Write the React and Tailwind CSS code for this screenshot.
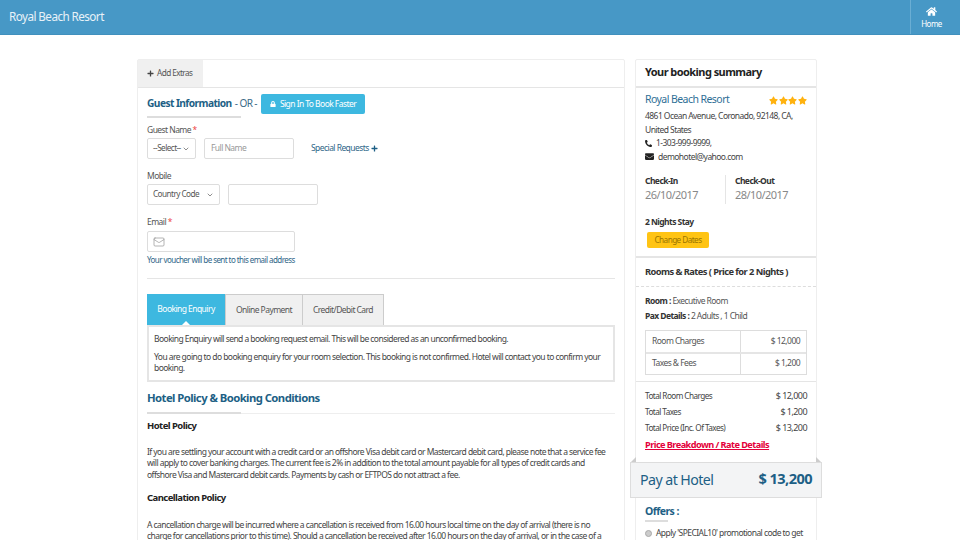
import React from 'react';
import { FaHome, FaPlus, FaLock, FaPhoneAlt, FaEnvelope, FaStar } from 'react-icons/fa';
import { ChevronDown, Mail } from 'lucide-react';

const SelectBox = ({ label, width }) => (
  <div className={`${width} h-[21px] border border-[#ddd] rounded-[2px] flex items-center justify-between px-[5px] text-[8.2px] text-[#555] whitespace-nowrap`}>
    <span>{label}</span>
    <ChevronDown size={8} strokeWidth={2} className="text-[#555] shrink-0" />
  </div>
);

const SectionUnderline = () => <div className="w-[94px] h-[2px] bg-[#ddd]" />;

const TotalRow = ({ label, value }) => (
  <div className="flex justify-between items-center h-[16px] text-[#444]">
    <span className="text-[8.2px]">{label}</span>
    <span className="text-[9px]">{value}</span>
  </div>
);

export default function App() {
  return (
    <div className="h-[540px] overflow-hidden bg-white text-[#444] font-['Noto_Sans',sans-serif] tracking-[-0.035em]">
      {/* Top bar */}
      <header className="h-[35px] bg-[#4798c6] border-b border-[#4190bd] flex justify-between">
        <div className="pl-[9px] pt-[8px] text-[11.7px] leading-[16px] text-[#e8f2f8]">Royal Beach Resort</div>
        <div className="w-[50px] border-l border-[#6aaed4] flex flex-col items-center pt-[6px] pr-[8px] text-white">
          <FaHome size={11} />
          <span className="text-[8px] leading-[11px] mt-[1px]">Home</span>
        </div>
      </header>

      <main className="flex gap-[10px] pl-[137px] pt-[24px]">
        {/* Left column */}
        <section className="w-[488px] border border-[#eee] rounded-t-[2px] h-[600px] shrink-0">
          <div className="h-[28px] border-b border-[#e5e5e5] flex">
            <div className="w-[65px] bg-[#f0f0f0] flex items-center pl-[9px] gap-[3px] text-[8.2px] text-[#555]">
              <FaPlus size={7} className="text-[#444]" />
              <span>Add Extras</span>
            </div>
          </div>

          <div className="px-[9px]">
            <div className="flex items-center h-[20px] mt-[6px]">
              <h2 className="text-[10.2px] leading-[18px] self-start font-bold text-[#1d5f85]">Guest Information</h2>
              <span className="text-[10px] leading-[18px] self-start text-[#3b6b88] ml-[3px]">- OR -</span>
              <div className="ml-[4px] h-[20px] w-[104px] rounded-[2px] bg-[#3db8e0] flex items-center justify-center gap-[4px] text-[8.5px] text-white">
                <FaLock size={6} />
                <span>Sign In To Book Faster</span>
              </div>
            </div>
            <div className="mt-[2px]"><SectionUnderline /></div>

            <div className="mt-[5px] text-[8.5px] leading-[14px] text-[#555]">Guest Name <span className="text-[#e44]">*</span></div>
            <div className="flex items-center mt-[1px]">
              <SelectBox label="--Select--" width="w-[49px]" />
              <div className="ml-[8px] w-[90px] h-[21px] border border-[#ddd] rounded-[2px] flex items-center pl-[6px] text-[8.5px] text-[#999]">Full Name</div>
              <div className="ml-[17px] flex items-center gap-[2px] text-[8.5px] text-[#2f6688]">
                <span>Special Requests</span>
                <FaPlus size={7} className="text-[#1d5f85]" />
              </div>
            </div>

            <div className="mt-[10px] text-[8.5px] leading-[14px] text-[#555]">Mobile</div>
            <div className="flex mt-[1px]">
              <SelectBox label="Country Code" width="w-[73px]" />
              <div className="ml-[8px] w-[90px] h-[21px] border border-[#ddd] rounded-[2px]" />
            </div>

            <div className="mt-[10px] text-[8.5px] leading-[14px] text-[#555]">Email <span className="text-[#e44]">*</span></div>
            <div className="mt-[2px] w-[148px] h-[21px] border border-[#ddd] rounded-[2px] flex items-center pl-[5px] text-[#888]">
              <Mail size={12} strokeWidth={1.25} />
            </div>
            <div className="mt-[1px] text-[8px] leading-[14px] text-[#2f6688]">Your voucher will be sent to this email address</div>

            <div className="mt-[11px] border-t border-[#e5e5e5]" />

            {/* Payment tabs */}
            <div className="mt-[15px] flex h-[31px] text-[8.5px]">
              <div className="relative w-[78px] bg-[#3db8e0] text-white flex items-center justify-center">
                Booking Enquiry
                <span className="absolute bottom-0 left-1/2 -translate-x-1/2 w-0 h-0 border-x-[4px] border-x-transparent border-b-[4px] border-b-white" />
              </div>
              <div className="w-[77px] bg-[#f0f0f0] border-t border-l border-[#ccc] flex items-center justify-center text-[#555]">Online Payment</div>
              <div className="w-[82px] bg-[#f0f0f0] border-t border-x border-[#ccc] flex items-center justify-center text-[#555]">Credit/Debit Card</div>
            </div>
            <div className="border-2 border-[#e5e5e5] px-[5px] pt-[6px] pb-[6px] text-[8.5px] leading-[11.5px] text-[#444]">
              <p>Booking Enquiry will send a booking request email. This will be considered as an unconfirmed booking.</p>
              <p className="mt-[6px]">You are going to do booking enquiry for your room selection. This booking is not confirmed. Hotel will contact you to confirm your booking.</p>
            </div>

            {/* Policies */}
            <h2 className="mt-[6px] text-[11.3px] leading-[20px] font-bold text-[#1d5f85]">Hotel Policy &amp; Booking Conditions</h2>
            <div className="mt-[4px] relative border-b border-[#eee] h-[2px]">
              <div className="absolute left-0 top-0"><SectionUnderline /></div>
            </div>
            <h3 className="mt-[5px] text-[9.5px] leading-[14px] font-bold text-[#222]">Hotel Policy</h3>
            <p className="mt-[13px] text-[8.5px] leading-[11.7px] text-[#444]">
              If you are settling your account with a credit card or an offshore Visa debit card or Mastercard debit card, please note that a service fee will apply to cover banking charges. The current fee is 2% in addition to the total amount payable for all types of credit cards and offshore Visa and Mastercard debit cards. Payments by cash or EFTPOS do not attract a fee.
            </p>
            <h3 className="mt-[10px] text-[9.5px] leading-[14px] font-bold text-[#222]">Cancellation Policy</h3>
            <p className="mt-[14px] text-[8.5px] leading-[11.7px] text-[#444]">
              A cancellation charge will be incurred where a cancellation is received from 16.00 hours local time on the day of arrival (there is no charge for cancellations prior to this time). Should a cancellation be received after 16.00 hours on the day of arrival, or in the case of a
            </p>
          </div>
        </section>

        {/* Booking summary */}
        <aside className="w-[182px] h-[600px] shrink-0 border border-[#eee] rounded-t-[2px]">
          <div className="h-[28px] border-b-2 border-[#e5e5e5] flex items-center pl-[9px] pb-[2px] text-[11px] font-bold text-[#222]">Your booking summary</div>

          <div className="px-[9px] pt-[3px]">
            <div className="flex justify-between items-start">
              <div className="text-[10.5px] leading-[16px] text-[#2f6f96]">Royal Beach Resort</div>
              <div className="flex gap-[0.7px] mt-[5px] text-[#ffb20f]">
                <FaStar size={9} /><FaStar size={9} /><FaStar size={9} /><FaStar size={9} />
              </div>
            </div>
            <div className="mt-[2px] text-[8.5px] leading-[13.7px] text-[#444]">
              <div className="whitespace-nowrap">4861 Ocean Avenue, Coronado, 92148, CA,</div>
              <div>United States</div>
              <div className="flex items-center gap-[4px]"><FaPhoneAlt size={7} className="text-[#222]" />1-303-999-9999,</div>
              <div className="flex items-center gap-[4px]"><FaEnvelope size={9} className="text-[#222]" />demohotel@yahoo.com</div>
            </div>

            <div className="flex mt-[11px] h-[29px]">
              <div className="w-[81px] border-r border-[#e5e5e5]">
                <div className="text-[8.5px] leading-[12px] font-bold text-[#333]">Check-In</div>
                <div className="text-[11px] leading-[15px] text-[#888]">26/10/2017</div>
              </div>
              <div className="pl-[9px]">
                <div className="text-[8.5px] leading-[12px] font-bold text-[#333]">Check-Out</div>
                <div className="text-[11px] leading-[15px] text-[#888]">28/10/2017</div>
              </div>
            </div>

            <div className="mt-[12px] text-[8.5px] leading-[12px] font-bold text-[#333]">2 Nights Stay</div>
            <div className="mt-[4px] ml-[2px] w-[62px] h-[16px] rounded-[2px] bg-[#ffc414] flex items-center justify-center text-[8.2px] text-[#9a7400]">Change Dates</div>
          </div>

          <div className="mt-[8px] border-t-2 border-[#e5e5e5] h-[30px] flex items-center pl-[9px] pt-[1px] text-[9.3px] font-bold text-[#333]">Rooms &amp; Rates ( Price for 2 Nights )</div>

          <div className="border-t border-dashed border-[#ddd] px-[9px] pt-[6px]">
            <div className="text-[8.5px] leading-[15px] text-[#555]"><b className="text-[#333]">Room :</b> Executive Room</div>
            <div className="text-[8.5px] leading-[15px] text-[#555]"><b className="text-[#333]">Pax Details :</b> 2 Adults , 1 Child</div>
            <div className="mt-[7px] border border-[#ddd] text-[8.5px] text-[#555]">
              <div className="flex h-[23px] border-b-2 border-[#e5e5e5] items-center">
                <div className="w-[95px] h-full border-r border-[#ddd] flex items-center pl-[6px]">Room Charges</div>
                <div className="flex-1 text-right pr-[6px]">$ 12,000</div>
              </div>
              <div className="flex h-[20px] items-center">
                <div className="w-[95px] h-full border-r border-[#ddd] flex items-center pl-[6px]">Taxes &amp; Fees</div>
                <div className="flex-1 text-right pr-[6px]">$ 1,200</div>
              </div>
            </div>
          </div>

          <div className="mt-[6px] border-t border-[#e5e5e5] px-[9px] pt-[6px]">
            <TotalRow label="Total Room Charges" value="$ 12,000" />
            <TotalRow label="Total Taxes" value="$ 1,200" />
            <TotalRow label="Total Price (Inc. Of Taxes)" value="$ 13,200" />
            <div className="mt-[2px] text-[9.2px] leading-[14px] font-bold text-[#e4003a] underline">Price Breakdown / Rate Details</div>
          </div>

          {/* Pay at hotel ribbon */}
          <div className="relative mx-[-6px] mt-[10px] h-[36px] bg-[#f3f4f5] border border-[#ddd] flex items-center justify-between px-[9px] pb-[1px] text-[#1d5f85]">
            <span className="absolute left-0 -top-[6px] w-0 h-0 border-l-[5px] border-l-transparent border-b-[5px] border-b-[#ccc]" />
            <span className="absolute right-0 -top-[6px] w-0 h-0 border-r-[5px] border-r-transparent border-b-[5px] border-b-[#ccc]" />
            <span className="text-[14.2px]">Pay at Hotel</span>
            <span className="text-[14.6px] font-bold">$ 13,200</span>
          </div>

          <div className="px-[9px] pt-[5px]">
            <div className="text-[10.5px] leading-[16px] font-bold text-[#1d5f85]">Offers :</div>
            <div className="mt-[1px] w-[23px] h-[2px] bg-[#ddd]" />
            <div className="mt-[5px] flex items-center gap-[4px] text-[8.5px] whitespace-nowrap text-[#444]">
              <span className="w-[7px] h-[7px] rounded-full bg-[#ccc] border border-[#aaa] shrink-0" />
              Apply 'SPECIAL10' promotional code to get
            </div>
          </div>
        </aside>
      </main>
    </div>
  );
}
